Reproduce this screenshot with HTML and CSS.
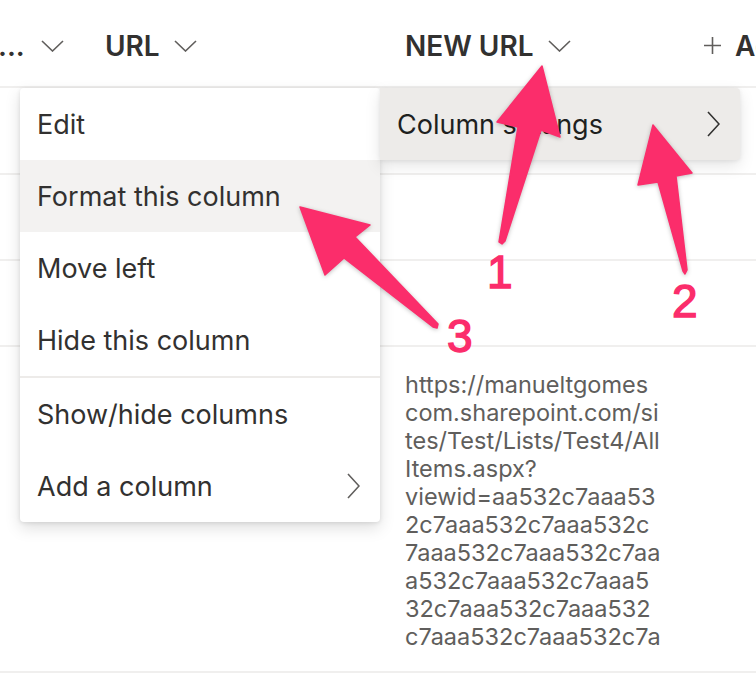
FILE: index.html
```html
<!DOCTYPE html>
<html lang="en">
<head>
    <meta charset="UTF-8">
    <meta name="viewport" content="width=device-width, initial-scale=1.0">
    <title>List columns</title>
    <link rel="stylesheet" href="styles.css">
</head>
<body>
    <div class="list">
        <!-- Column headers -->
        <div class="row header">
            <div class="col first">
                <span class="title">...</span>
                <svg class="chev-down" width="23" height="12" viewBox="0 0 23 12"><path d="M1 1 L11.5 11 L22 1"/></svg>
            </div>
            <div class="col">
                <span class="title">URL</span>
                <svg class="chev-down" width="23" height="12" viewBox="0 0 23 12"><path d="M1 1 L11.5 11 L22 1"/></svg>
            </div>
            <div class="col">
                <span class="title">NEW URL</span>
                <svg class="chev-down" width="23" height="12" viewBox="0 0 23 12"><path d="M1 1 L11.5 11 L22 1"/></svg>
            </div>
            <div class="col add">
                <svg class="plus" width="17" height="17" viewBox="0 0 17 17"><path d="M8.5 0 V17 M0 8.5 H17"/></svg>
                <span class="title">Add column</span>
            </div>
        </div>

        <!-- Rows -->
        <div class="row item r1"></div>
        <div class="row item r2"></div>
        <div class="row item r3"></div>
        <div class="row item tall">
            <div class="cell"></div>
            <div class="cell"></div>
            <div class="cell url">https://manueltgomes<br>com.sharepoint.com/si<br>tes/Test/Lists/Test4/All<br>Items.aspx?<br>viewid=aa532c7aaa53<br>2c7aaa532c7aaa532c<br>7aaa532c7aaa532c7aa<br>a532c7aaa532c7aaa5<br>32c7aaa532c7aaa532<br>c7aaa532c7aaa532c7a</div>
        </div>
        <div class="row item last"></div>
    </div>

    <!-- Column context menu -->
    <div class="menu">
        <div class="menu-item">Edit</div>
        <div class="menu-item hover">Format this column</div>
        <div class="menu-item">Move left</div>
        <div class="menu-item">Hide this column</div>
        <div class="divider"></div>
        <div class="menu-item">Show/hide columns</div>
        <div class="menu-item">
            <span>Add a column</span>
            <svg class="chev-right" width="13" height="26" viewBox="0 0 13 26"><path d="M1 1 L12 13 L1 25"/></svg>
        </div>
    </div>

    <!-- Submenu -->
    <div class="submenu">
        <span>Column settings</span>
        <svg class="chev-right" width="13" height="26" viewBox="0 0 13 26"><path d="M1 1 L12 13 L1 25"/></svg>
    </div>

    <!-- Annotation arrows -->
    <svg class="notes" width="756" height="690" viewBox="0 0 756 690">
        <g class="arrow">
            <polygon points="542,66 560,137 541,130 505,241 502,244 499,242 518,127 497,122"/>
            <polygon points="653,125 692,173 676,176 687,270 685,274 683,271 658,182 638,185"/>
            <polygon points="300,207 370,225 355,237 438,324 437,328 433,327 344,258 325,275"/>
        </g>
        <text class="num" x="487" y="288">1</text>
        <text class="num" x="672" y="317">2</text>
        <text class="num" x="447" y="352">3</text>
    </svg>
</body>
</html>
```

FILE: styles.css
```css
body {
    margin: 0;
    padding: 0;
    background-color: #fff;
    font-family: Inter, "Noto Sans", sans-serif;
    color: #323130;
    overflow: hidden;
}
.list {
    width: 756px;
}
.row {
    display: grid;
    grid-template-columns: 105px 300px 299px 1fr;
    border-bottom: 2px solid #f0efee;
}
.header {
    height: 88px;
    box-sizing: border-box;
    padding-top: 6px;
    align-items: center;
}
.col {
    display: flex;
    align-items: center;
    gap: 14px;
    white-space: nowrap;
    overflow: hidden;
}
.col svg {
    flex-shrink: 0;
}
.col.first {
    gap: 16px;
    margin-left: -2px;
}
.title {
    font-size: 28px;
    font-weight: 600;
    color: #323130;
}
.chev-down path,
.chev-right path,
.plus path {
    fill: none;
    stroke: #605e5c;
    stroke-width: 1.6;
}
.col.add {
    gap: 14px;
}
.plus {
    margin-top: -2px;
}
.r1 {
    height: 85px;
}
.r2,
.r3 {
    height: 84px;
}
.tall {
    height: 324px;
}
.last {
    height: 40px;
    border-bottom: none;
}
.cell.url {
    padding-top: 24px;
    font-size: 23.5px;
    line-height: 28px;
    color: #605e5c;
}

/* context menu */
.menu {
    position: absolute;
    left: 20px;
    top: 88px;
    width: 360px;
    background-color: #fff;
    border-radius: 4px;
    box-shadow: 0 6px 16px rgba(0, 0, 0, 0.13), 0 1px 4px rgba(0, 0, 0, 0.1);
}
.menu-item {
    height: 72px;
    display: flex;
    align-items: center;
    justify-content: space-between;
    padding: 0 20px 0 17px;
    font-size: 27px;
    color: #323130;
}
.menu-item.hover {
    background-color: #f3f2f1;
}
.divider {
    height: 2px;
    background-color: #edebe9;
}
.submenu {
    position: absolute;
    left: 380px;
    top: 88px;
    width: 360px;
    height: 72px;
    box-sizing: border-box;
    display: flex;
    align-items: center;
    justify-content: space-between;
    padding: 0 20px 0 17px;
    background-color: #edebe9;
    border-radius: 0 4px 4px 0;
    box-shadow: 0 6px 16px rgba(0, 0, 0, 0.1), 0 1px 4px rgba(0, 0, 0, 0.08);
    font-size: 27px;
    color: #201f1e;
}
.submenu .chev-right path {
    stroke: #323130;
}

/* annotations */
.notes {
    position: absolute;
    left: 0;
    top: 0;
    pointer-events: none;
}
.arrow polygon {
    fill: #fb2d6b;
    stroke: #fb2d6b;
    stroke-width: 1.5;
    stroke-linejoin: round;
}
.arrow {
    filter: drop-shadow(0 1px 2px rgba(0, 0, 0, 0.25));
}
.num {
    font-family: "Liberation Sans", Arial, sans-serif;
    font-size: 46px;
    fill: #fb2d6b;
    stroke: #fb2d6b;
    stroke-width: 1.4;
}
```
